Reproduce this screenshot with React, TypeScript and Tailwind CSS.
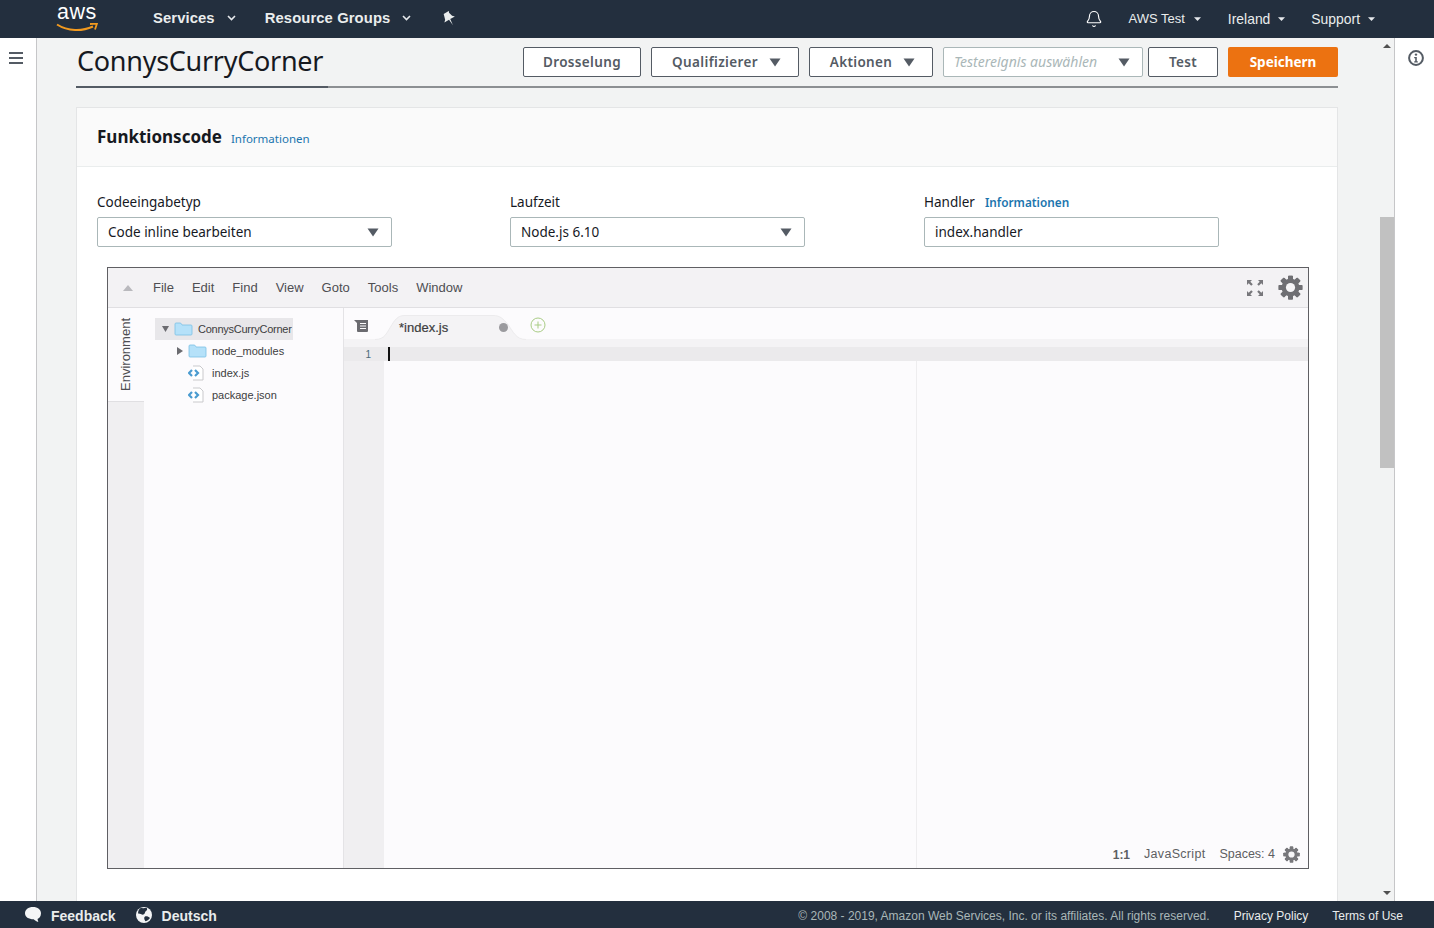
import { Bell } from 'lucide-react'

const ui = "font-['Noto_Sans',sans-serif]"
const arial = "font-['Liberation_Sans',Arial,sans-serif]"

function Caret({ className = '' }: { className?: string }) {
  return (
    <svg width="12" height="9" viewBox="0 0 12 9" className={className}>
      <path d="M0.5 0.5h11L6 8.5z" fill="#545b64" />
    </svg>
  )
}

function Chevron({ bold }: { bold?: boolean }) {
  return (
    <svg width="9" height="6" viewBox="0 0 9 6">
      {bold ? (
        <path d="M1 1l3.5 3.5L8 1" fill="none" stroke="#e6e9ec" strokeWidth="1.6" />
      ) : (
        <path d="M1 1.2h7L4.5 5z" fill="#e6e9ec" />
      )}
    </svg>
  )
}

function Gear({ size, color }: { size: number; color: string }) {
  const teeth = [0, 45, 90, 135, 180, 225, 270, 315]
  return (
    <svg width={size} height={size} viewBox="0 0 24 24">
      {teeth.map(a => (
        <rect key={a} x="9.6" y="0.6" width="4.8" height="22.8" rx="0.8" fill={color} transform={`rotate(${a} 12 12)`} />
      ))}
      <circle cx="12" cy="12" r="8.6" fill={color} />
      <circle cx="12" cy="12" r="4.4" fill="#f6f5f7" />
    </svg>
  )
}

function Folder() {
  return (
    <svg width="19" height="14" viewBox="0 0 19 14">
      <path d="M1 3V2q0-1 1-1h4q1 0 1.500 1l.5 1h9q1 0 1 1v8q0 1-1 1H2q-1 0-1-1z" fill="#b5e1f9" stroke="#7cc0e4" strokeWidth="0.8" />
    </svg>
  )
}

function FileIcon() {
  return (
    <svg width="17" height="16" viewBox="0 0 17 16">
      <path d="M5 1h7l3 3v11H5" fill="#fff" stroke="#c9c9cc" />
      <path d="M4 5L1 8l3 3" fill="none" stroke="#4a9bd0" strokeWidth="2.200" />
      <path d="M7 5l3 3-3 3" fill="none" stroke="#4a9bd0" strokeWidth="2.200" />
    </svg>
  )
}

function PinIcon() {
  return (
    <svg width="16" height="16" viewBox="0 0 14 14">
      <path d="M5.200 0.800h5.200l-.6 1.400 1 3.600 1.800 1.800H7.900L7.300 13.400 6.700 7.600H2l1.800-1.800 1-3.600z" fill="#eaeded" transform="rotate(-30 7 7)" />
    </svg>
  )
}

function ActionButton({ label, caret, width, gap }: { label: string; caret?: boolean; width: string; gap?: string }) {
  return (
    <button className={`${width} ${gap} ${caret ? 'pl-[3px]' : ''} h-[30px] flex items-center justify-center bg-white border border-[#545b64] rounded-[2px] text-[13.5px] font-semibold text-[#545b64] tracking-[0.35px]`}>
      {label}
      {caret && <Caret className="ml-[11px]" />}
    </button>
  )
}

function Field({ label, value, info, caret, width }: { label: string; value: string; info?: boolean; caret?: boolean; width: string }) {
  return (
    <div className={width}>
      <div className="h-[20px] flex items-center text-[13.5px] text-[#16191f]">
        {label}
        {info && <span className="ml-[10px] mt-[2px] text-[11.8px] font-semibold text-[#1b75ae]">Informationen</span>}
      </div>
      <div className="mt-[5px] w-full h-[30px] bg-white border border-[#aab7b8] rounded-[2px] flex items-center justify-between pl-[10px] pr-[12px] text-[13.5px] text-[#16191f]">
        {value}
        {caret && <Caret />}
      </div>
    </div>
  )
}

function TreeRow({ indent, active, caret, icon, label }: { indent: string; active?: boolean; caret?: boolean; icon: 'folder' | 'file'; label: string }) {
  return (
    <div className={`h-[22px] flex items-center ${indent} ${active ? 'bg-[#e8e7ea] w-[138px]' : ''}`}>
      <span className="w-[12px] flex">
        {caret && (
          <svg width="7" height="8" viewBox="0 0 7 8">
            {active ? <path d="M0 1h7L3.500 7z" fill="#6b6b70" /> : <path d="M1 0l6 4-6 4z" fill="#6b6b70" />}
          </svg>
        )}
      </span>
      <span className="w-[24px] flex">{icon === 'folder' ? <Folder /> : <FileIcon />}</span>
      <span className={`${arial} ${active ? 'tracking-[-0.25px]' : ''} text-[11px] text-[#3d3d40] whitespace-nowrap`}>{label}</span>
    </div>
  )
}

const menus = ['File', 'Edit', 'Find', 'View', 'Goto', 'Tools', 'Window']

function Editor() {
  return (
    <div className={`${arial} ml-[30px] w-[1202px] h-[602px] flex flex-col border border-[#5f5f63] bg-[#fcfbfd]`}>
      <div className="h-[40px] shrink-0 flex items-center bg-[#f3f2f4] border-b border-[#e0dfe2] pl-[15px] pr-[5px]">
        <svg width="10" height="6" viewBox="0 0 10 6">
          <path d="M0 6L5 0l5 6z" fill="#b9b9bd" />
        </svg>
        <div className="ml-[20px] flex gap-[18px] text-[13px] text-[#4e4e52]">
          {menus.map(m => (
            <span key={m}>{m}</span>
          ))}
        </div>
        <div className="ml-auto flex items-center gap-[14px]">
          <svg width="18" height="18" viewBox="0 0 18 18" fill="#77777b">
            <path d="M1 1h5L4.300 2.700 6.800 5.200 5.200 6.800 2.700 4.300 1 6z" />
            <path d="M17 1v5l-1.700-1.700-2.500 2.500-1.600-1.600 2.500-2.500L12 1z" />
            <path d="M1 17v-5l1.700 1.700 2.500-2.500 1.600 1.600-2.500 2.500L6 17z" />
            <path d="M17 17h-5l1.700-1.700-2.500-2.500 1.600-1.600 2.500 2.500L17 12z" />
          </svg>
          <Gear size={25} color="#6f6f73" />
        </div>
      </div>
      <div className="flex-1 min-h-0 flex">
        <div className="w-[36px] shrink-0 flex flex-col bg-[#f0eff1]">
          <div className="h-[94px] bg-[#fcfbfd] flex items-center justify-center border-b border-[#e0dfe2] pr-[1px]">
            <span className="text-[13px] text-[#4e4e52] [writing-mode:vertical-rl] rotate-180">Environment</span>
          </div>
        </div>
        <div className="w-[200px] shrink-0 border-r border-[#e4e3e6] pt-[10px] pl-[11px]">
          <TreeRow indent="pl-[7px]" active caret icon="folder" label="ConnysCurryCorner" />
          <TreeRow indent="pl-[21px]" caret icon="folder" label="node_modules" />
          <TreeRow indent="pl-[21px]" icon="file" label="index.js" />
          <TreeRow indent="pl-[21px]" icon="file" label="package.json" />
        </div>
        <div className="flex-1 min-w-0 flex flex-col">
          <div className="h-[31px] shrink-0 flex items-end pl-[10px] bg-[#fcfbfd]">
            <svg width="15" height="12" viewBox="0 0 15 12" className="mb-[7px]">
              <path d="M0 0h14v11q0 1-1 1H4q-1 0-1-1V3z" fill="#6b6b70" />
              <path d="M6 3.500h6M6 6h6M6 8.500h6" stroke="#fcfbfd" strokeWidth="1" />
            </svg>
            <div className="ml-[6px] w-[151px] h-[24px] relative flex items-center pl-[24px] pr-[18px] justify-between">
              <svg width="151" height="25" viewBox="0 0 151 25" className="absolute left-0 top-0">
                <path d="M0 24.500c10 0 12-7 17-15C21 3 24 .5 30 .5h88c7 0 10 3 15 9 5 7 8 15 18 15" fill="#f4f3f5" stroke="#ecebed" />
              </svg>
              <span className="relative mt-[2px] text-[13px] text-[#3d3d40] [-webkit-text-stroke:0.2px_#3d3d40]">*index.js</span>
              <span className="relative w-[9px] h-[9px] rounded-full bg-[#9a9a9e]" />
            </div>
            <svg width="16" height="16" viewBox="0 0 16 16" className="ml-[4px] mb-[6px]">
              <circle cx="8" cy="8" r="7" fill="none" stroke="#a9cc85" />
              <path d="M8 4.500v7M4.500 8h7" stroke="#a9cc85" />
            </svg>
          </div>
          <div className="h-[8px] shrink-0 bg-[#f4f3f5]" />
          <div className="h-[14px] shrink-0 flex bg-[#ebeaec]">
            <div className="w-[40px] pr-[13px] text-right text-[10px] leading-[15px] text-[#4a6a7a]">1</div>
            <div className="ml-[4px] w-[2px] h-[14px] bg-[#111]" />
          </div>
          <div className="flex-1 min-h-0 flex">
            <div className="w-[40px] bg-[#f0eff1]" />
            <div className="flex-1 relative">
              <div className="w-[533px] h-full border-r border-[#eeedef]" />
              <div className="absolute right-[8px] bottom-[4px] flex items-center text-[12.5px] text-[#5e5e62]">
                <span className="font-bold text-[12px]">1:1</span>
                <span className="ml-[14px] tracking-[0.3px]">JavaScript</span>
                <span className="ml-[14px]">Spaces: 4</span>
                <span className="ml-[8px] flex">
                  <Gear size={17} color="#77777b" />
                </span>
              </div>
            </div>
          </div>
        </div>
      </div>
    </div>
  )
}

export default function App() {
  return (
    <div className={`${ui} w-[1434px] h-[928px] flex flex-col overflow-hidden bg-white`}>
      <header className="h-[38px] shrink-0 bg-[#232f3e] flex items-center text-white">
        <div className="ml-[56px] w-[42px] h-[32px] relative">
          <span className={`${arial} absolute left-[1px] top-[-3px] text-[21.5px] leading-[24px] text-white tracking-[0.5px]`}>aws</span>
          <svg width="42" height="10" viewBox="0 0 42 10" className="absolute left-0 top-[20px]">
            <path d="M1 1.500c11 7 25 7 36 2" fill="none" stroke="#f29a1f" strokeWidth="2" />
            <path d="M34 1l7-.5-2 6" fill="none" stroke="#f29a1f" strokeWidth="1.800" />
          </svg>
        </div>
        <nav className={`${arial} ml-[55px] -mt-[2px] flex items-center font-bold text-[14.8px] tracking-[0.1px] text-[#eaeded]`}>
          <span>Services</span>
          <span className="ml-[12px] flex"><Chevron bold /></span>
          <span className="ml-[29px]">Resource Groups</span>
          <span className="ml-[12px] flex"><Chevron bold /></span>
          <span className="ml-[30px] mt-[1px] flex"><PinIcon /></span>
        </nav>
        <div className={`${arial} ml-auto mr-[58px] flex items-center text-[13.5px] text-[#eaeded]`}>
          <Bell size={18} strokeWidth={1.5} className="text-white" />
          <span className="ml-[26px] text-[13px]">AWS Test</span>
          <span className="ml-[8px] flex"><Chevron /></span>
          <span className="ml-[26px] text-[13.9px]">Ireland</span>
          <span className="ml-[7px] flex"><Chevron /></span>
          <span className="ml-[25px] text-[13.9px]">Support</span>
          <span className="ml-[7px] flex"><Chevron /></span>
        </div>
      </header>

      <div className="flex-1 min-h-0 flex">
        <aside className="w-[37px] shrink-0 bg-white border-r border-[#c6c6c8] pt-[14px] pl-[9px]">
          <div className="w-[14px] flex flex-col gap-[3px]">
            <span className="h-[2px] bg-[#545b64]" />
            <span className="h-[2px] bg-[#545b64]" />
            <span className="h-[2px] bg-[#545b64]" />
          </div>
        </aside>

        <main className="w-[1358px] shrink-0 bg-[#f2f3f3] pl-[39px] overflow-hidden">
          <div className="w-[1262px] h-[50px] flex items-center border-b-2 border-[#8c8f92] relative">
            <h1 className="ml-[1px] text-[27px] leading-[46px] h-[48px] text-[#16191f] tracking-[-0.28px]">ConnysCurryCorner</h1>
            <div className="absolute left-0 bottom-[-2px] w-[252px] h-[2px] bg-[#545b64]" />
            <div className="ml-auto flex items-center">
              <ActionButton label="Drosselung" width="w-[118px]" />
              <ActionButton label="Qualifizierer" caret width="w-[148px]" gap="ml-[10px]" />
              <ActionButton label="Aktionen" caret width="w-[124px]" gap="ml-[10px]" />
              <div className="ml-[10px] w-[200px] h-[30px] bg-white border border-[#aab7b8] rounded-[2px] flex items-center justify-between pl-[10px] pr-[12px] text-[14px] italic text-[#aab7b8]">
                <span className="-mt-[2px]">Testereignis auswählen</span>
                <Caret />
              </div>
              <ActionButton label="Test" width="w-[70px]" gap="ml-[5px]" />
              <button className="ml-[10px] w-[110px] h-[30px] bg-[#ec7211] rounded-[2px] text-[13.5px] font-bold text-white">Speichern</button>
            </div>
          </div>

          <section className="mt-[19px] w-[1262px] h-[800px] bg-white border border-[#e4e5e6] border-b-0">
            <div className="h-[59px] bg-[#fafafa] border-b border-[#eaeded] flex items-center pl-[20px]">
              <h2 className="text-[17px] font-bold text-[#16191f]">Funktionscode</h2>
              <span className="ml-[9px] mt-[3px] text-[11.5px] text-[#1b75ae]">Informationen</span>
            </div>
            <div className="pt-[25px] pl-[20px] flex">
              <Field label="Codeeingabetyp" value="Code inline bearbeiten" caret width="w-[295px]" />
              <Field label="Laufzeit" value="Node.js 6.10" caret width="w-[295px] ml-[118px]" />
              <Field label="Handler" value="index.handler" info width="w-[295px] ml-[119px]" />
            </div>
            <div className="mt-[20px]">
              <Editor />
            </div>
          </section>
        </main>

        <div className="w-[15px] shrink-0 -ml-[15px] bg-[#f2f3f3] relative flex flex-col items-center border-r border-[#c6c6c8]">
          <svg width="8" height="4" viewBox="0 0 8 4" className="mt-[6px]">
            <path d="M0 4l4-4 4 4z" fill="#505050" />
          </svg>
          <div className="mt-[169px] w-full h-[251px] bg-[#c1c1c1]" />
          <svg width="8" height="4" viewBox="0 0 8 4" className="mt-auto mb-[6px]">
            <path d="M0 0l4 4 4-4z" fill="#505050" />
          </svg>
        </div>

        <aside className="flex-1 bg-white pt-[12px] pl-[13px]">
          <svg width="16" height="16" viewBox="0 0 16 16">
            <circle cx="8" cy="8" r="6.900" fill="none" stroke="#545b64" strokeWidth="2" />
            <circle cx="8" cy="4.600" r="1.200" fill="#545b64" />
            <path d="M6.200 7h2.600v4.200h1v1.200H6.200v-1.200h1V8.200h-1z" fill="#545b64" />
          </svg>
        </aside>
      </div>

      <footer className={`${arial} h-[27px] shrink-0 bg-[#232f3e] flex items-center pt-[2px] text-[12px] text-[#eaeded]`}>
        <svg width="18" height="17" viewBox="0 0 18 17" className="ml-[24px] -mt-[2px]">
          <path d="M9 1c4.700 0 8 2.700 8 6.200s-2 5-3.500 5.800l.8 3c-2-.6-3.600-1.600-4.600-2.800C4.500 13.200 1 11 1 7.200 1 3.700 4.300 1 9 1z" fill="#f4f5f6" />
        </svg>
        <span className="ml-[9px] mt-[1px] text-[14px] font-bold">Feedback</span>
        <svg width="16" height="16" viewBox="0 0 16 16" className="ml-[20px] -mt-[2px]">
          <circle cx="8" cy="8" r="8" fill="#f4f5f6" />
          <path d="M5 .8c1.500.7 4 .2 5.500 0 1 1 1 2.200-.5 3.200-1.500 1-.5 2.500-2.500 3.500C6 8.200 4 6 2 6.500 2 4 3 2 5 .8zM9 9.500c1.500-.5 3.500 0 5 1.500-1 1.600-2.500 2.800-4.500 3.200C8.500 13 7.500 10.500 9 9.500z" fill="#232f3e" />
        </svg>
        <span className="ml-[10px] mt-[1px] text-[14px] font-bold">Deutsch</span>
        <span className="ml-auto text-[#aab7b8]">© 2008 - 2019, Amazon Web Services, Inc. or its affiliates. All rights reserved.</span>
        <span className="ml-[24px]">Privacy Policy</span>
        <span className="ml-[24px] mr-[31px]">Terms of Use</span>
      </footer>
    </div>
  )
}
